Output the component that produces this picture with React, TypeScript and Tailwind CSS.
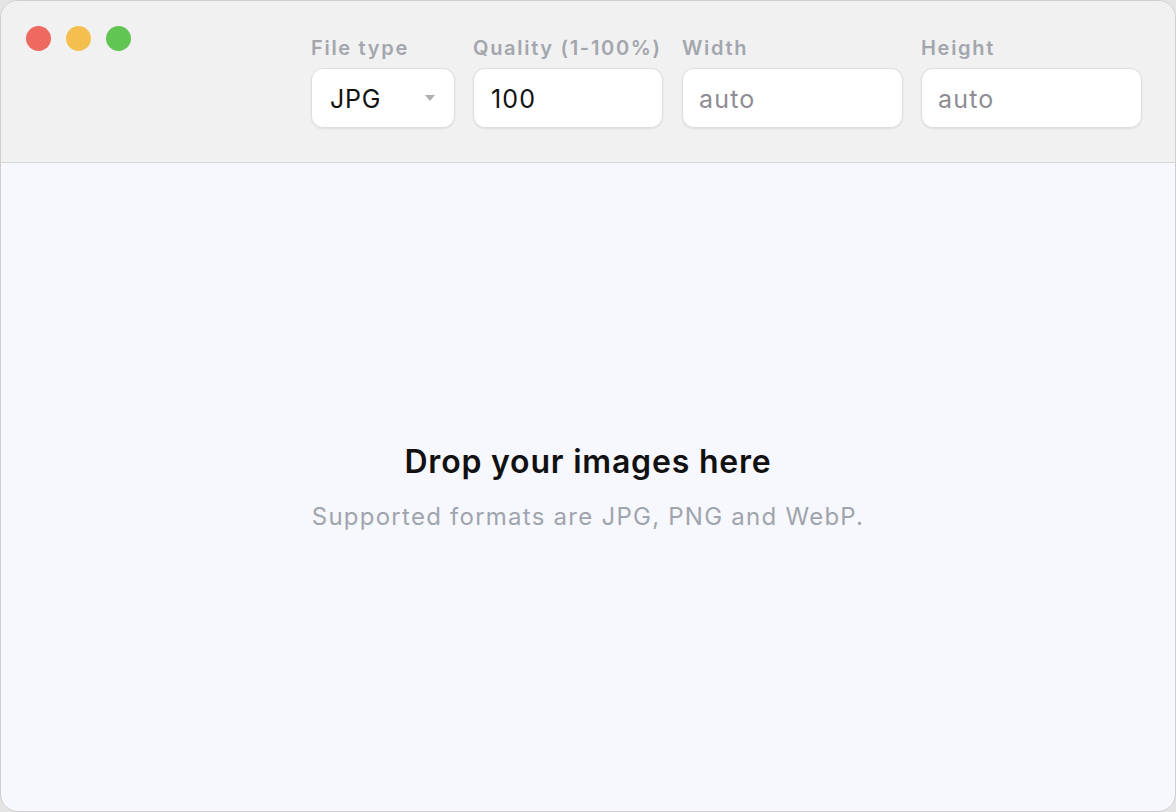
import React from "react";

const font = { fontFamily: "Inter, 'Noto Sans', sans-serif" };

function Field({ label, width, children }: { label: string; width: string; children: React.ReactNode }) {
  return (
    <div className={`flex flex-col gap-[8px] ${width}`}>
      <div className="text-[20px] leading-[24px] font-semibold text-[#a3a6ad] tracking-[1.7px] whitespace-nowrap">{label}</div>
      {children}
    </div>
  );
}

const box =
  "h-[60px] rounded-[12px] bg-white border border-[#dedede] shadow-[0_1px_2px_rgba(0,0,0,0.08)] flex items-center pt-[3px]";

export default function App() {
  return (
    <div className="w-[1176px] h-[812px] bg-[#e4e4e4]" style={font}>
      <div className="w-full h-full flex flex-col overflow-hidden rounded-[18px] border border-[#cfcfcf] bg-[#f7f8fd]">
        <div className="h-[162px] shrink-0 bg-[#f1f1f1] border-b border-[#d6d6d6] flex">
          <div className="w-[310px] shrink-0 flex gap-[15px] pl-[25px] pt-[25px]">
            <div className="w-[25px] h-[25px] rounded-full bg-[#ee6a5e]" />
            <div className="w-[25px] h-[25px] rounded-full bg-[#f5bf4f]" />
            <div className="w-[25px] h-[25px] rounded-full bg-[#61c554]" />
          </div>
          <div className="flex gap-[18px] pt-[35px]">
            <Field label="File type" width="w-[144px]">
              <div className={`${box} justify-between pl-[18px] pr-[18px]`}>
                <span className="text-[25px] tracking-[0.8px] text-[#111]">JPG</span>
                <svg width="12" height="8" viewBox="0 0 12 8" className="-mt-[3px]"><path d="M1 1 L11 1 L6 7 Z" fill="#b0b0b0" /></svg>
              </div>
            </Field>
            <Field label="Quality (1-100%)" width="w-[190px]">
              <div className={`${box} pl-[17px]`}>
                <span className="text-[25px] tracking-[1.2px] text-[#111]">100</span>
              </div>
            </Field>
            <Field label="Width" width="w-[221px] ml-[1px]">
              <div className={`${box} pl-[16px]`}>
                <span className="text-[25px] tracking-[1.2px] text-[#8d8d92]">auto</span>
              </div>
            </Field>
            <Field label="Height" width="w-[221px]">
              <div className={`${box} pl-[16px]`}>
                <span className="text-[25px] tracking-[1.2px] text-[#8d8d92]">auto</span>
              </div>
            </Field>
          </div>
        </div>
        <div className="flex-1 flex flex-col items-center justify-center">
          <div className="text-[32px] leading-[40px] font-semibold text-[#111] tracking-[0.8px]">Drop your images here</div>
          <div className="mt-[20px] text-[24px] leading-[30px] text-[#a0a4ad] tracking-[1.25px]">Supported formats are JPG, PNG and WebP.</div>
        </div>
      </div>
    </div>
  );
}
